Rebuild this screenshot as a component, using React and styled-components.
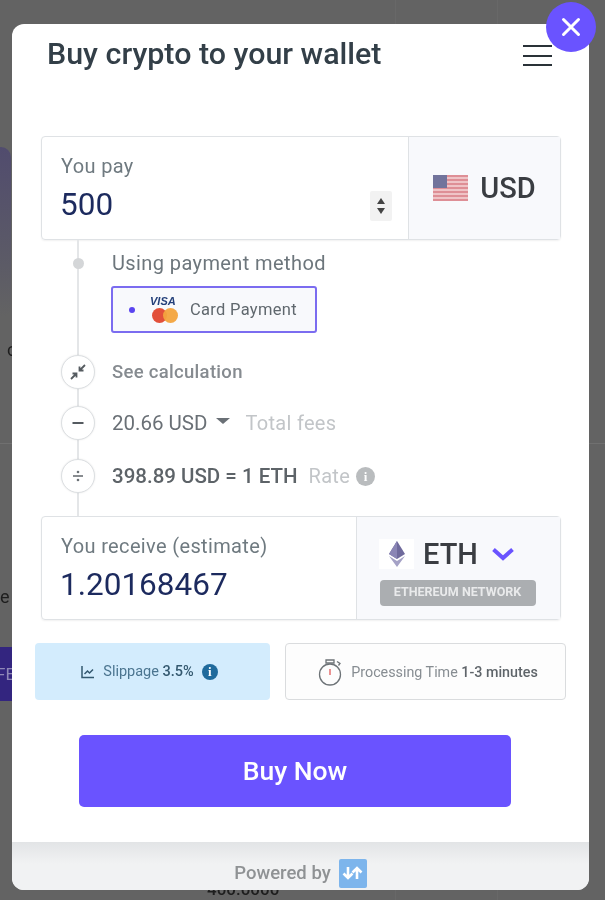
import React from "react";
import styled, { createGlobalStyle } from "styled-components";

const Global = createGlobalStyle`
  html, body { margin: 0; padding: 0; }
  body { font-family: Roboto, "Liberation Sans", sans-serif; background: #636363; }
`;

const Page = styled.div`
  position: relative;
  width: 605px;
  height: 900px;
  overflow: hidden;
  padding: 24px 16px 10px 12px;
  box-sizing: border-box;
  background: #636363;
  filter: blur(0.45px);
`;

const BackdropCard = styled.div`
  position: absolute;
  left: -20px;
  top: 147px;
  width: 31px;
  height: 170px;
  border-radius: 10px;
  background: linear-gradient(#514c6e, #5c5b66 70%, #636363);
`;
const BackdropBand = styled.div`
  position: absolute;
  left: 0;
  top: 647px;
  width: 12px;
  height: 54px;
  background: #33257f;
  color: #8f88b8;
  font-size: 17px;
  line-height: 54px;
  text-indent: -4px;
  overflow: hidden;
`;
const BackdropRule = styled.div`
  position: absolute;
  left: 0;
  right: 0;
  top: ${(p) => p.$top}px;
  height: 1px;
  background: #707070;
`;
const BackdropColumn = styled.div`
  position: absolute;
  left: 395px;
  top: 0;
  bottom: 0;
  width: 101px;
  border-left: 1px solid #686868;
  border-right: 1px solid #686868;
`;
const BackdropNumber = styled.div`
  position: absolute;
  left: 207px;
  top: 879px;
  font-size: 17px;
  font-weight: 500;
  color: #1e1e1e;
`;
const BackdropLetter = styled.div`
  position: absolute;
  left: ${(p) => p.$left}px;
  top: ${(p) => p.$top}px;
  font-size: 18px;
  color: #1e1e1e;
`;

const Modal = styled.div`
  position: relative;
  width: 577px;
  height: 866px;
  background: #fff;
  border-radius: 12px;
  display: flex;
  flex-direction: column;
`;
const CloseButton = styled.button`
  position: absolute;
  right: -7px;
  top: -22px;
  width: 50px;
  height: 50px;
  padding: 0;
  border: none;
  border-radius: 50%;
  background: #6a53ff;
  display: flex;
  align-items: center;
  justify-content: center;
`;
const Header = styled.header`
  display: flex;
  justify-content: space-between;
  align-items: flex-start;
  padding: 11px 37px 0 35px;
  height: 112px;
  box-sizing: border-box;
`;
const Title = styled.h1`
  margin: 0;
  font-size: 30.4px;
  line-height: 38px;
  font-weight: 500;
  color: #333f48;
`;
const Burger = styled.div`
  margin-top: 10px;
  width: 29px;
  display: flex;
  flex-direction: column;
  gap: 7.5px;
  span { display: block; height: 2px; background: #2a3238; }
`;
const Body = styled.div`
  padding: 0 28px 0 29px;
  display: flex;
  flex-direction: column;
`;
const AmountBox = styled.div`
  display: flex;
  height: 104px;
  box-sizing: border-box;
  border: 1px solid #dfe2e5;
  border-radius: 4px;
  box-shadow: 0 1px 2px rgba(0, 0, 0, 0.06);
`;
const AmountMain = styled.div`
  position: relative;
  flex: 1;
  padding: 17px 19px 0;
`;
const AmountLabel = styled.div`
  font-size: 20px;
  line-height: 24px;
  letter-spacing: 0.35px;
  color: #6f7a80;
`;
const AmountValue = styled.div`
  margin: 9px 0 0 -1px;
  font-size: 31.5px;
  line-height: 36px;
  color: #1c2a5e;
`;
const Stepper = styled.div`
  position: absolute;
  right: 16px;
  bottom: 18px;
  width: 22px;
  height: 30px;
  background: #f2f2f2;
  border-radius: 2px;
  display: flex;
  flex-direction: column;
  align-items: center;
  justify-content: center;
  gap: 4px;
`;
const Tri = styled.i`
  width: 0;
  height: 0;
  border-left: 4.5px solid transparent;
  border-right: 4.5px solid transparent;
  ${(p) => (p.$up ? "border-bottom: 6px solid #444;" : "border-top: 6px solid #444;")}
`;
const CurrencyBox = styled.div`
  width: ${(p) => p.$w}px;
  box-sizing: border-box;
  background: #f8f9fc;
  border-left: 1px solid #dfe2e5;
  padding-top: ${(p) => p.$pt || 0}px;
  display: flex;
  flex-direction: column;
  align-items: center;
  justify-content: center;
`;
const CurrencyRow = styled.div`
  display: flex;
  align-items: center;
  gap: ${(p) => p.$gap}px;
  height: 31px;
  padding-right: ${(p) => p.$pr || 0}px;
  font-size: 29px;
  font-weight: 500;
  color: #3a3d42;
`;
const Timeline = styled.div`
  position: relative;
  height: 276px;
  padding-left: 71px;
  box-sizing: border-box;
  &::before {
    content: "";
    position: absolute;
    left: 36px;
    top: 0;
    bottom: 0;
    width: 2px;
    background: #e4e6e8;
  }
`;
const Row = styled.div`
  position: relative;
  display: flex;
  align-items: center;
  height: ${(p) => p.$h}px;
  margin-top: ${(p) => p.$mt || 0}px;
`;
const Dot = styled.span`
  position: absolute;
  left: -39px;
  top: 50%;
  width: 11px;
  height: 11px;
  margin-top: -5px;
  border-radius: 50%;
  background: #d4d6d8;
`;
const Bubble = styled.span`
  position: absolute;
  left: -51px;
  top: 50%;
  margin-top: -17px;
  width: 34px;
  height: 34px;
  box-sizing: border-box;
  border: 1px solid #dcdfe2;
  border-radius: 50%;
  background: #fff;
  display: flex;
  align-items: center;
  justify-content: center;
  box-shadow: 0 0 2px rgba(0,0,0,.1);
`;
const MethodLabel = styled.span`
  font-size: 20px;
  letter-spacing: 0.4px;
  color: #6d767c;
`;
const CardOption = styled.div`
  width: 206px;
  height: 47px;
  margin-left: -1px;
  box-sizing: border-box;
  border: 2px solid #7b6cf0;
  border-radius: 3px;
  background: #f8f9fc;
  display: flex;
  align-items: center;
  padding-left: 16px;
`;
const PurpleDot = styled.span`
  width: 6px;
  height: 6px;
  border-radius: 50%;
  background: #5a45f0;
  margin-right: 15px;
`;
const CardLabel = styled.span`
  margin-left: 10px;
  font-size: 16.5px;
  letter-spacing: 0.3px;
  color: #60686e;
`;
const SeeCalc = styled.span`
  font-size: 18.5px;
  font-weight: 500;
  letter-spacing: 0.3px;
  color: #868b90;
`;
const Fee = styled.span`
  font-size: 20.5px;
  color: #6a7076;
`;
const Caret = styled.i`
  width: 0;
  height: 0;
  margin: 0 16px 4px 8px;
  border-left: 7px solid transparent;
  border-right: 7px solid transparent;
  border-top: 6px solid #6a7076;
`;
const Muted = styled.span`
  font-size: 20px;
  letter-spacing: 0.3px;
  color: #c2c5c8;
`;
const Rate = styled.span`
  font-size: 20.5px;
  font-weight: 500;
  color: #5d6368;
  margin-right: 11px;
`;
const InfoCircle = styled.span`
  width: ${(p) => p.$size}px;
  height: ${(p) => p.$size}px;
  margin-left: ${(p) => p.$ml}px;
  border-radius: 50%;
  background: ${(p) => p.$bg};
  color: #fff;
  font: bold 13px/${(p) => p.$size}px "Liberation Serif", serif;
  text-align: center;
`;
const Badge = styled.div`
  margin: 11px 2px 0 0;
  width: 156px;
  height: 26px;
  border-radius: 4px;
  background: #abaeb1;
  color: #e9eaeb;
  font-size: 12.5px;
  font-weight: 700;
  line-height: 24px;
  text-align: center;
  white-space: nowrap;
`;
const InfoRow = styled.div`
  display: flex;
  justify-content: space-between;
  margin: 23px -5px 0 -6px;
  height: 57px;
`;
const Slippage = styled.div`
  width: 235px;
  box-sizing: border-box;
  padding-right: 6px;
  border-radius: 4px;
  background: #d3ecfd;
  display: flex;
  align-items: center;
  justify-content: center;
  gap: 8px;
  font-size: 14.5px;
  color: #4b7590;
  b { color: #33586f; font-weight: 500; }
`;
const Processing = styled.div`
  width: 281px;
  box-sizing: border-box;
  padding: 1px 0 0 5px;
  border: 1px solid #dadcde;
  border-radius: 4px;
  background: #fdfdfd;
  display: flex;
  align-items: center;
  justify-content: center;
  gap: 7px;
  font-size: 14.3px;
  color: #878d92;
  b { color: #5f656a; font-weight: 500; }
`;
const BuyButton = styled.button`
  align-self: flex-start;
  margin: 35px 0 0 38px;
  width: 432px;
  height: 72px;
  padding-bottom: 2px;
  border: none;
  border-radius: 5px;
  background: #6a53ff;
  color: #fff;
  font: 500 26.5px Roboto, sans-serif;
`;
const Footer = styled.footer`
  margin-top: auto;
  height: 48px;
  border-radius: 0 0 12px 12px;
  background: linear-gradient(#e2e4e6, #f1f2f3 45%);
  display: flex;
  align-items: center;
  justify-content: center;
  gap: 8px;
  padding-top: 14px;
  box-sizing: border-box;
  font-size: 18.5px;
  font-weight: 500;
  color: #8f9294;
`;
const Logo = styled.span`
  width: 28px;
  height: 29px;
  border-radius: 2px;
  background: #7db5ec;
  display: flex;
  align-items: center;
  justify-content: center;
`;
const EthPlate = styled.span`
  width: 35px;
  height: 30px;
  background: #fff;
  display: flex;
  align-items: center;
  justify-content: center;
`;
const Chevron = styled.svg`
  margin-left: 4px;
`;

const Flag = () => (
  <svg width="35" height="26" viewBox="0 0 35 26">
    <rect width="35" height="26" fill="#efc4c7" />
    {[0, 4, 8, 12, 16, 20, 24].map((y) => (
      <rect key={y} y={y} width="35" height="2" fill="#de8f96" />
    ))}
    <rect width="14" height="13" fill="#72749c" />
  </svg>
);

const Cards = () => (
  <svg width="30" height="28" viewBox="0 0 30 28">
    <text x="0" y="9" fontFamily="Liberation Sans" fontSize="11" fontWeight="700" fontStyle="italic" fill="#24407a">VISA</text>
    <circle cx="9.500" cy="19.500" r="7.500" fill="#e2503a" />
    <circle cx="20.500" cy="19.500" r="7.500" fill="#f3a43e" opacity="0.95" />
  </svg>
);

const Eth = () => (
  <svg width="20" height="26" viewBox="0 0 20 26">
    <path d="M10 0 L18 13 L10 18 L2 13Z" fill="#6f6a9c" />
    <path d="M10 0 L10 18 L2 13Z" fill="#8a85b5" />
    <path d="M2 15 L10 20 L18 15 L10 26Z" fill="#a5a2c6" />
  </svg>
);

export default function App() {
  return (
    <Page>
      <Global />
      <BackdropColumn />
      <BackdropCard />
      <BackdropBand>FE</BackdropBand>
      <BackdropRule $top={443} />
      <BackdropLetter $top={339} $left={7}>c</BackdropLetter>
      <BackdropLetter $top={586} $left={0}>e</BackdropLetter>
      <BackdropNumber>400.0000</BackdropNumber>
      <Modal>
        <CloseButton aria-label="Close">
          <svg width="24" height="24" viewBox="0 0 24 24" fill="none" stroke="#fff" strokeWidth="3" strokeLinecap="round">
            <path d="M4.500 4.500 19.500 19.500M19.500 4.500 4.500 19.500" />
          </svg>
        </CloseButton>
        <Header>
          <Title>Buy crypto to your wallet</Title>
          <Burger><span /><span /><span /></Burger>
        </Header>
        <Body>
          <AmountBox>
            <AmountMain>
              <AmountLabel>You pay</AmountLabel>
              <AmountValue>500</AmountValue>
              <Stepper><Tri $up /><Tri /></Stepper>
            </AmountMain>
            <CurrencyBox $w={152}>
              <CurrencyRow $gap={12}><Flag />USD</CurrencyRow>
            </CurrencyBox>
          </AmountBox>
          <Timeline>
            <Row $h={46}>
              <Dot />
              <MethodLabel>Using payment method</MethodLabel>
            </Row>
            <CardOption>
              <PurpleDot />
              <Cards />
              <CardLabel>Card Payment</CardLabel>
            </CardOption>
            <Row $h={34} $mt={22}>
              <Bubble>
                <svg width="18" height="18" viewBox="0 0 18 18" fill="none" stroke="#555b60" strokeWidth="1.800">
                  <path d="M16 2 11 7M10.500 3.500v4H14.500M2 16l5-5M7.500 14.500v-4H3.500" />
                </svg>
              </Bubble>
              <SeeCalc>See calculation</SeeCalc>
            </Row>
            <Row $h={34} $mt={17}>
              <Bubble>
                <svg width="14" height="14" viewBox="0 0 14 14"><rect x="1.500" y="6" width="11" height="2" fill="#555b60" /></svg>
              </Bubble>
              <Fee>20.66 USD</Fee>
              <Caret />
              <Muted>Total fees</Muted>
            </Row>
            <Row $h={34} $mt={19}>
              <Bubble>
                <svg width="14" height="14" viewBox="0 0 14 14" fill="#6b7176">
                  <rect x="2" y="6.200" width="10" height="1.600" />
                  <circle cx="7" cy="3" r="1.300" />
                  <circle cx="7" cy="11" r="1.300" />
                </svg>
              </Bubble>
              <Rate>398.89 USD = 1 ETH</Rate>
              <Muted>Rate</Muted>
              <InfoCircle $bg="#b9bcbe" $size={19} $ml={6}>i</InfoCircle>
            </Row>
          </Timeline>
          <AmountBox>
            <AmountMain>
              <AmountLabel>You receive (estimate)</AmountLabel>
              <AmountValue>1.20168467</AmountValue>
            </AmountMain>
            <CurrencyBox $w={204} $pt={8}>
              <CurrencyRow $gap={9} $pr={23}>
                <EthPlate><Eth /></EthPlate>
                ETH
                <Chevron width="24" height="14" viewBox="0 0 24 14" fill="none" stroke="#6a53ff" strokeWidth="4">
                  <path d="M2.500 2.500 12 11 21.500 2.500" />
                </Chevron>
              </CurrencyRow>
              <Badge>ETHEREUM NETWORK</Badge>
            </CurrencyBox>
          </AmountBox>
          <InfoRow>
            <Slippage>
              <svg width="14" height="14" viewBox="0 0 14 14" fill="none" stroke="#33586f" strokeWidth="1.500">
                <path d="M1 1v11.500h12M3.500 9 6.500 6l2 2 3.500-3.500" />
              </svg>
              <span>Slippage <b>3.5%</b></span>
              <InfoCircle $bg="#1f6a9c" $size={16} $ml={0}>i</InfoCircle>
            </Slippage>
            <Processing>
              <svg width="26" height="30" viewBox="0 0 26 30" fill="none" stroke="#6d7377" strokeWidth="1.300">
                <circle cx="12" cy="17.500" r="10.500" />
                <path d="M8 3h8v3H8zM19 4.500l3 2-1.500 2" />
                <path d="M12 12v6" stroke="#e05a5a" />
              </svg>
              <span>Processing Time <b>1-3 minutes</b></span>
            </Processing>
          </InfoRow>
          <BuyButton>Buy Now</BuyButton>
        </Body>
        <Footer>
          Powered by
          <Logo>
            <svg width="22" height="16" viewBox="0 0 22 16" fill="none" stroke="#fff" strokeWidth="2.600">
              <path d="M6 2v11M1.500 8.500 6 13l4.500-4.500M15 14V3M10.500 7.500 15 3l4.500 4.500" />
            </svg>
          </Logo>
        </Footer>
      </Modal>
    </Page>
  );
}
